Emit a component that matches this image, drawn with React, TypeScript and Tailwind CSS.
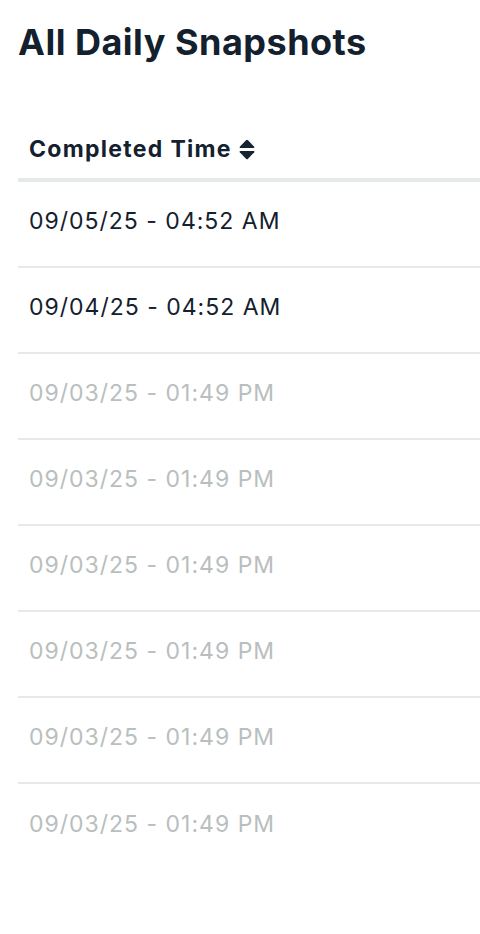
import React from 'react'

const rows = [
  { time: '09/05/25 - 04:52 AM', done: true },
  { time: '09/04/25 - 04:52 AM', done: true },
  { time: '09/03/25 - 01:49 PM', done: false },
  { time: '09/03/25 - 01:49 PM', done: false },
  { time: '09/03/25 - 01:49 PM', done: false },
  { time: '09/03/25 - 01:49 PM', done: false },
  { time: '09/03/25 - 01:49 PM', done: false },
  { time: '09/03/25 - 01:49 PM', done: false },
]

function SortIcon() {
  return (
    <svg width="16" height="21" viewBox="0 0 16 21" className="ml-[7px] shrink-0">
      <path d="M7 1.2 Q8 0.2 9 1.2 L15.2 7.8 Q16 9 14.6 9 H1.4 Q0 9 0.8 7.8 Z" fill="#16222f" />
      <path d="M1.4 12 H14.6 Q16 12 15.2 13.2 L9 19.8 Q8 20.8 7 19.8 L0.8 13.2 Q0 12 1.4 12 Z" fill="#16222f" />
    </svg>
  )
}

export default function App() {
  return (
    <div className="min-h-screen bg-white pl-[18px] pt-[20px] font-['Inter',sans-serif] text-[#13202d]">
      {/* Title */}
      <h1 className="text-[36px] font-bold leading-[44px] tracking-[0.5px]">All Daily Snapshots</h1>

      {/* Table */}
      <div className="mt-[56px]">
        <div className="flex h-[62px] items-center border-b-4 border-[#e6e9e9] pl-[11px]">
          <span className="text-[23px] font-bold tracking-[1.3px]">Completed Time</span>
          <SortIcon />
        </div>
        {rows.map((row, i) => (
          <div
            key={i}
            className={`flex h-[86px] items-center pb-[6px] pl-[11px] ${i < rows.length - 1 ? 'border-b-2 border-[#e6e9e9]' : ''}`}
          >
            <span className={`text-[23px] tracking-[1px] ${row.done ? 'text-[#13202d]' : 'text-[#b9bebe]'}`}>{row.time}</span>
          </div>
        ))}
      </div>
    </div>
  )
}
